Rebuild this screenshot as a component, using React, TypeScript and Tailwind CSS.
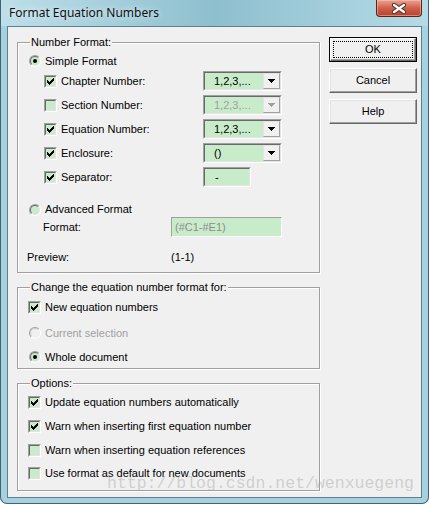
import React from 'react';

const GREEN = 'bg-[#c8ecca]';

const CheckMark: React.FC<{ disabled?: boolean }> = ({ disabled }) => (
  <svg width="7" height="7" viewBox="0 0 7 7" shapeRendering="crispEdges">
    <path
      d="M0 2h1v3H0z M1 3h1v3H1z M2 4h1v3H2z M3 3h1v3H3z M4 2h1v3H4z M5 1h1v3H5z M6 0h1v3H6z"
      fill={disabled ? '#a0a0a0' : '#000'}
    />
  </svg>
);

const CheckBox: React.FC<{ checked?: boolean }> = ({ checked }) => (
  <span className="w-[13px] h-[13px] shrink-0 border border-t-[#a0a0a0] border-l-[#a0a0a0] border-b-white border-r-white flex">
    <span className={`flex-1 border border-t-[#696969] border-l-[#696969] border-b-[#e3e3e3] border-r-[#e3e3e3] ${GREEN} flex items-center justify-center`}>
      {checked && <CheckMark />}
    </span>
  </span>
);

const Radio: React.FC<{ checked?: boolean; disabled?: boolean }> = ({ checked, disabled }) => (
  <span className="w-[12px] h-[12px] shrink-0 rounded-full border border-t-[#a0a0a0] border-l-[#a0a0a0] border-b-white border-r-white flex">
    <span
      className={`flex-1 rounded-full border flex items-center justify-center ${
        disabled
          ? 'border-t-[#c8c8c8] border-l-[#c8c8c8] border-b-[#f0f0f0] border-r-[#f0f0f0] bg-[#f0f0f0]'
          : `border-t-[#696969] border-l-[#696969] border-b-[#e3e3e3] border-r-[#e3e3e3] ${GREEN}`
      }`}
    >
      {checked && <span className="w-[4px] h-[4px] rounded-full bg-black" />}
    </span>
  </span>
);

const Arrow: React.FC<{ disabled?: boolean }> = ({ disabled }) => (
  <svg width="7" height="4" viewBox="0 0 7 4" shapeRendering="crispEdges">
    <path d="M0 0h7v1H0z M1 1h5v1H1z M2 2h3v1H2z M3 3h1v1H3z" fill={disabled ? '#a0a0a0' : '#000'} />
  </svg>
);

const Sunken: React.FC<{ className?: string; children?: React.ReactNode }> = ({ className = '', children }) => (
  <div className={`border border-t-[#a0a0a0] border-l-[#a0a0a0] border-b-white border-r-white flex ${className}`}>
    <div className={`flex-1 border border-t-[#696969] border-l-[#696969] border-b-[#e3e3e3] border-r-[#e3e3e3] ${GREEN} flex items-center`}>
      {children}
    </div>
  </div>
);

const Combo: React.FC<{ value: string; disabled?: boolean }> = ({ value, disabled }) => (
  <Sunken className="w-[79px] h-[20px]">
    <span className={`flex-1 pl-[9px] text-[11px] leading-[16px] ${disabled ? 'text-[#a0a0a0]' : 'text-black'}`}>{value}</span>
    <span className="w-[17px] h-[16px] bg-[#f0f0f0] border border-t-[#e3e3e3] border-l-[#e3e3e3] border-b-[#a0a0a0] border-r-[#a0a0a0] flex items-center justify-center">
      <Arrow disabled={disabled} />
    </span>
  </Sunken>
);

const Group: React.FC<{ label: string; className?: string; children?: React.ReactNode }> = ({ label, className = '', children }) => (
  <div className={`relative border border-[#a0a0a0] shadow-[inset_1px_1px_0_#fff,1px_1px_0_#fff] flex flex-col ${className}`}>
    <span className="absolute -top-[8px] left-[12px] bg-[#f0f0f0] px-[1px] text-[11px] leading-[14px]">{label}</span>
    {children}
  </div>
);

const CheckRow: React.FC<{ label: string; checked?: boolean; className?: string }> = ({ label, checked, className = '' }) => (
  <div className={`h-[16px] flex items-center pl-[10px] ${className}`}>
    <CheckBox checked={checked} />
    <span className="ml-[4px] text-[11px]">{label}</span>
  </div>
);

const RadioRow: React.FC<{ label: string; checked?: boolean; disabled?: boolean; className?: string }> = ({ label, checked, disabled, className = '' }) => (
  <div className={`h-[16px] flex items-center pl-[11px] ${className}`}>
    <Radio checked={checked} disabled={disabled} />
    <span className={`ml-[4px] text-[11px] ${disabled ? 'text-[#a0a0a0]' : ''}`}>{label}</span>
  </div>
);

const Button: React.FC<{ label: string; isDefault?: boolean }> = ({ label, isDefault }) =>
  isDefault ? (
    <div className="w-[88px] h-[25px] border border-black flex">
      <div className="flex-1 border border-t-white border-l-white border-b-[#696969] border-r-[#696969] shadow-[inset_-1px_-1px_0_#a0a0a0] bg-[#f0f0f0] flex p-[2px]">
        <div className="flex-1 border border-dotted border-black flex items-center justify-center text-[11px]">{label}</div>
      </div>
    </div>
  ) : (
    <div className="w-[88px] h-[25px] border border-t-white border-l-white border-b-[#696969] border-r-[#696969] shadow-[inset_-1px_-1px_0_#a0a0a0,inset_1px_1px_0_#e3e3e3] bg-[#f0f0f0] flex items-center justify-center text-[11px]">
      {label}
    </div>
  );

const formatRows = [
  { label: 'Chapter Number:', checked: true, value: '1,2,3,...' },
  { label: 'Section Number:', checked: false, value: '1,2,3,...', disabled: true },
  { label: 'Equation Number:', checked: true, value: '1,2,3,...' },
  { label: 'Enclosure:', checked: true, value: '()' },
];

export default function App() {
  return (
    <div className="w-[429px] h-[505px] bg-white relative font-['Liberation_Sans',Arial,sans-serif] text-black">
      <div className="w-[429px] h-[504px] flex flex-col bg-[#a6d1e0] border-x border-b border-[#43616e] rounded-b-[7px]">
        {/* title bar */}
        <div className="h-[26px] flex items-start bg-gradient-to-r from-[#bddfe9] via-[#8ebfcf] to-[#b4dbe6]">
          <span className="pl-[8px] leading-[25px] text-[12px] text-[#111] font-['Noto_Sans',sans-serif] [text-shadow:0_0_6px_rgba(255,255,255,0.9)]">
            Format Equation Numbers
          </span>
          <div className="ml-auto mr-[6px] w-[46px] h-[17px] rounded-b-[4px] border border-t-0 border-[#5e2219] bg-gradient-to-b from-[#e9a592] via-[#d0604c] to-[#b8402c] shadow-[inset_0_0_0_1px_rgba(255,200,190,0.5)] flex items-center justify-center">
            <svg width="14" height="11" viewBox="0 0 14 11">
              <path d="M2 2 L12 9 M12 2 L2 9" stroke="#4a2a26" strokeWidth="4.2" strokeLinecap="round" />
              <path d="M2 2 L12 9 M12 2 L2 9" stroke="#fff" strokeWidth="2.4" strokeLinecap="round" />
            </svg>
          </div>
        </div>

        {/* client area */}
        <div className="mx-[6px] h-[472px] border border-[#5f7f8c] bg-[#f0f0f0] flex pl-[9px] pt-[10px]">
          <div className="w-[303px] pt-[5px] flex flex-col">
            <Group label="Number Format:" className="h-[231px]">
              <RadioRow label="Simple Format" checked className="mt-[10px]" />
              {formatRows.map((r) => (
                <div key={r.label} className="h-[24px] flex items-center pl-[26px]">
                  <CheckBox checked={r.checked} />
                  <span className="w-[142px] ml-[4px] text-[11px]">{r.label}</span>
                  <Combo value={r.value} disabled={r.disabled} />
                </div>
              ))}
              <div className="h-[24px] flex items-center pl-[26px]">
                <CheckBox checked />
                <span className="w-[142px] ml-[4px] text-[11px]">Separator:</span>
                <Sunken className="w-[48px] h-[20px]">
                  <span className="pl-[10px] text-[11px]">-</span>
                </Sunken>
              </div>
              <RadioRow label="Advanced Format" className="mt-[13px] !h-[15px]" />
              <div className="h-[20px] flex items-center pl-[25px]">
                <span className="w-[128px] text-[11px]">Format:</span>
                <div className={`w-[111px] h-[20px] border border-t-[#a0a0a0] border-l-[#a0a0a0] border-b-white border-r-white ${GREEN} flex items-center pl-[3px] text-[11px] text-[#8c8c8c]`}>
                  (#C1-#E1)
                </div>
              </div>
              <div className="mt-[12px] h-[16px] flex items-center pl-[9px] text-[11px]">
                <span className="w-[144px]">Preview:</span>
                <span>(1-1)</span>
              </div>
            </Group>

            <Group label="Change the equation number format for:" className="mt-[14px] h-[82px]">
              <CheckRow label="New equation numbers" checked className="mt-[11px]" />
              <RadioRow label="Current selection" disabled className="mt-[10px]" />
              <RadioRow label="Whole document" checked className="mt-[8px]" />
            </Group>

            <Group label="Options:" className="mt-[14px] h-[108px]">
              <CheckRow label="Update equation numbers automatically" checked className="mt-[10px]" />
              <CheckRow label="Warn when inserting first equation number" checked className="mt-[8px]" />
              <CheckRow label="Warn when inserting equation references" className="mt-[8px]" />
              <CheckRow label="Use format as default for new documents" className="mt-[7px]" />
            </Group>
          </div>

          <div className="ml-[9px] flex flex-col gap-[6px]">
            <Button label="OK" isDefault />
            <Button label="Cancel" />
            <Button label="Help" />
          </div>
        </div>
      </div>

      {/* watermark */}
      <span className="absolute left-[107px] top-[474px] text-[16.5px] leading-[20px] text-[#9a9a9a]/40 font-['Liberation_Mono',monospace] pointer-events-none">
        http://blog.csdn.net/wenxuegeng
      </span>
    </div>
  );
}
